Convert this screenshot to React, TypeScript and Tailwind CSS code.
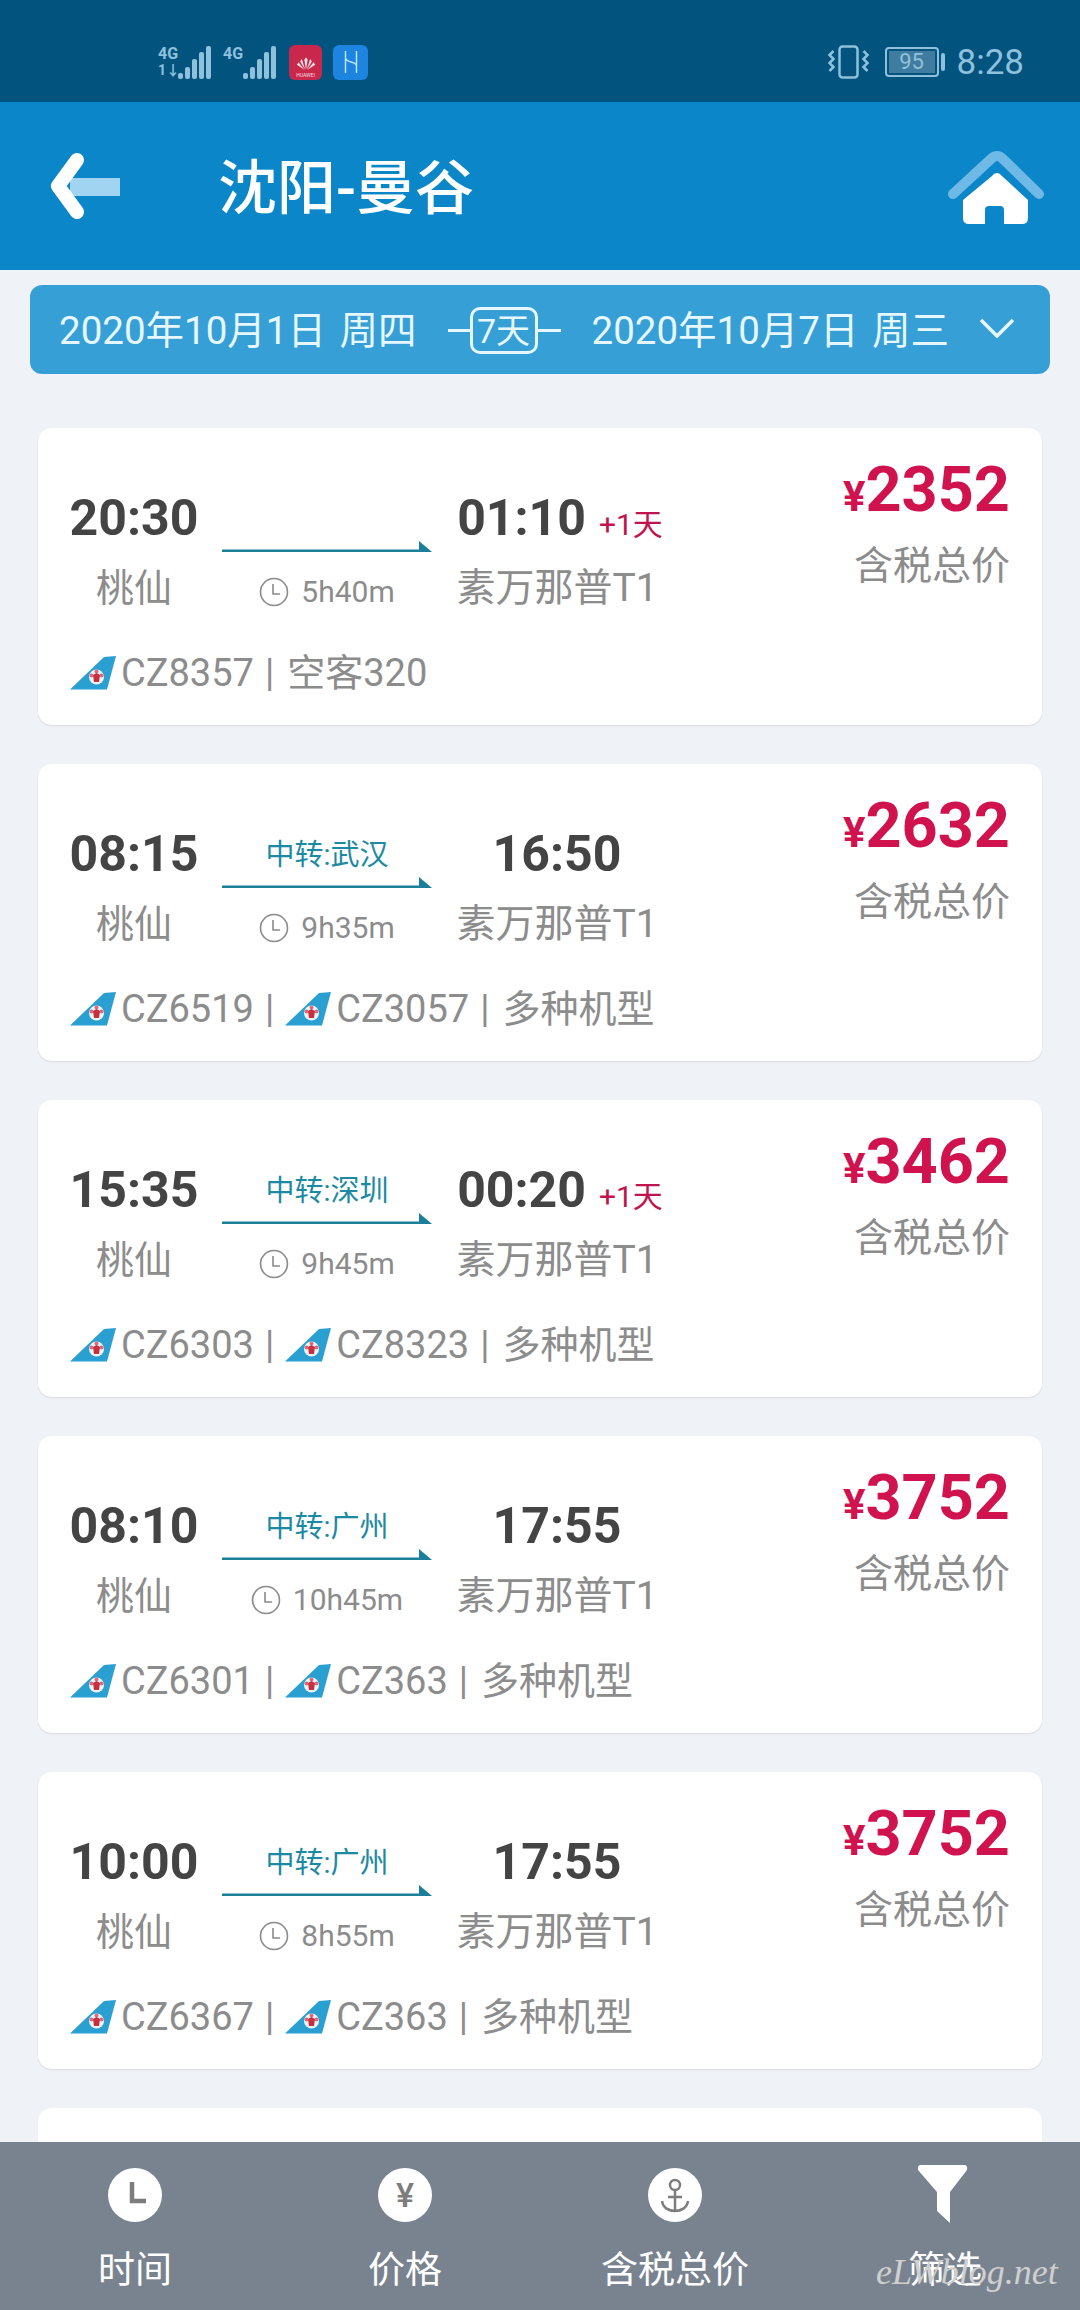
const FONT = "font-['Roboto','Noto_Sans_CJK_SC',sans-serif]";

interface Flight {
  dep: string;
  arr: string;
  plusDay?: boolean;
  via?: string;
  duration: string;
  flights: string[];
  plane: string;
  price: string;
}

const flights: Flight[] = [
  { dep: "20:30", arr: "01:10", plusDay: true, duration: "5h40m", flights: ["CZ8357"], plane: "空客320", price: "2352" },
  { dep: "08:15", arr: "16:50", via: "中转:武汉", duration: "9h35m", flights: ["CZ6519", "CZ3057"], plane: "多种机型", price: "2632" },
  { dep: "15:35", arr: "00:20", plusDay: true, via: "中转:深圳", duration: "9h45m", flights: ["CZ6303", "CZ8323"], plane: "多种机型", price: "3462" },
  { dep: "08:10", arr: "17:55", via: "中转:广州", duration: "10h45m", flights: ["CZ6301", "CZ363"], plane: "多种机型", price: "3752" },
  { dep: "10:00", arr: "17:55", via: "中转:广州", duration: "8h55m", flights: ["CZ6367", "CZ363"], plane: "多种机型", price: "3752" },
];

function Tail() {
  return (
    <svg viewBox="0 0 46 34" className="w-[46px] h-[34px] shrink-0">
      <path d="M0 33.5 L34 1 L46 0 L37 33.5 Z" fill="#2a9fd2" />
      <circle cx="26.5" cy="21" r="7.5" fill="#eef6fb" />
      <circle cx="26.5" cy="15.5" r="2" fill="#e2687a" />
      <circle cx="21.5" cy="19.5" r="2" fill="#e2687a" />
      <circle cx="31.5" cy="19.5" r="2" fill="#e2687a" />
      <path d="M23 19 L26.5 17 L30 19 L29 26 L24 26 Z" fill="#c8303f" />
    </svg>
  );
}

function Clock() {
  return (
    <svg viewBox="0 0 30 30" className="w-[30px] h-[30px]" fill="none" stroke="#8a8a8a" strokeWidth="1.6">
      <circle cx="15" cy="15" r="13.5" />
      <path d="M14 7 V17 H21" />
    </svg>
  );
}

function FlightCard({ f }: { f: Flight }) {
  return (
    <div className="bg-white rounded-[14px] h-[297px] shrink-0 shadow-[0_1px_2px_rgba(0,0,0,0.1)] pl-[15px] pr-[32px] pt-[60px]">
      <div className="flex">
        <div className="w-[162px] flex flex-col items-center">
          <div className="h-[60px] leading-[60px] text-[50px] font-bold text-[#444444]">{f.dep}</div>
          <div className="mt-[15px] leading-[50px] text-[38px] text-[#8c8c8c]">桃仙</div>
        </div>
        <div className="w-[210px] ml-[7px] flex flex-col items-center">
          <div className="h-[42px] leading-[42px] text-[29px] text-[#1d8aa3] mt-[10px]">{f.via ?? ""}</div>
          <svg viewBox="0 0 210 12" className="w-[210px] h-[12px] mt-[1px]">
            <path d="M0 8.5 H197 V0 L210 11 H0 Z" fill="#1a7f9a" />
          </svg>
          <div className="mt-[14px] flex items-center gap-[12px] text-[30px] leading-[50px] text-[#8c8c8c]">
            <Clock />
            {f.duration}
          </div>
        </div>
        <div className="w-[250px] flex flex-col items-center">
          <div className={f.plusDay ? "h-[60px] flex items-baseline gap-[13px] ml-[6px]" : "h-[60px] flex items-baseline"}>
            <span className="leading-[60px] text-[50px] font-bold text-[#444444]">{f.arr}</span>
            {f.plusDay && <span className="text-[30px] text-[#c0144f]">+1天</span>}
          </div>
          <div className="mt-[15px] leading-[50px] text-[39px] text-[#8c8c8c]">素万那普T1</div>
        </div>
        <div className="ml-auto flex flex-col items-end -mt-[33px]">
          <div className="flex items-baseline">
            <span className="text-[42px] font-bold text-[#d0124f]">¥</span>
            <span className="leading-[70px] text-[63px] font-bold text-[#d0124f]">{f.price}</span>
          </div>
          <div className="mt-[13px] leading-[50px] text-[39px] text-[#8c8c8c]">含税总价</div>
        </div>
      </div>
      <div className="mt-[31px] ml-[17px] flex items-center text-[38px] leading-[50px] text-[#8c8c8c]">
        {f.flights.map((no) => (
          <span key={no} className="flex items-center">
            <Tail />
            <span className="ml-[5px]">{no}</span>
            <span className="mx-[11px]">|</span>
          </span>
        ))}
        <span className="ml-[2px]">{f.plane}</span>
      </div>
    </div>
  );
}

function Signal({ first }: { first?: boolean }) {
  return (
    <div className="flex items-end gap-[2px] h-[33px]">
      <div className="flex flex-col text-[16px] leading-[16px] font-bold text-[#8fc0dc] mr-[1px] w-[17px] self-start whitespace-nowrap">
        <span>4G</span>
        {first && <span className="text-[14px]">1↓</span>}
      </div>
      {[6, 12, 20, 27, 33].map((h) => (
        <span key={h} className="w-[5px] bg-[#8fc0dc] rounded-[2px]" style={{ height: h }} />
      ))}
    </div>
  );
}

export default function App() {
  return (
    <div className={`${FONT} w-[1080px] h-[2310px] flex flex-col overflow-hidden bg-[#eff2f6]`}>
      {/* status bar */}
      <div className="h-[102px] shrink-0 bg-[#02547f] flex items-center pl-[158px] pr-[56px] pt-[22px]">
        <Signal first />
        <div className="ml-[12px]">
          <Signal />
        </div>
        <div className="ml-[13px] w-[33px] h-[35px] rounded-[6px] bg-[#c9284c] flex flex-col items-center justify-end pb-[2px]">
          <svg viewBox="0 0 24 16" className="w-[20px] h-[16px]" fill="#f7dfe3">
            <path d="M12 15 L10 3 L12 0 L14 3 Z M11 15 L5 5 L7 2 Z M13 15 L19 5 L17 2 Z M10 15 L1 9 L3 6 Z M14 15 L23 9 L21 6 Z" />
          </svg>
          <span className="text-[5px] leading-[6px] text-[#f7dfe3]">HUAWEI</span>
        </div>
        <div className="ml-[11px] w-[35px] h-[35px] rounded-[6px] bg-[#1d84e0] flex items-center justify-center">
          <svg viewBox="0 0 24 28" className="w-[22px] h-[26px]" fill="none" stroke="#bfe6fb" strokeWidth="1.6">
            <path d="M6 2 V26 M18 2 V26 M6 10 C8 16 16 12 18 18" />
          </svg>
        </div>
        <div className="ml-auto flex items-center text-[#8fc0dc]">
          <svg viewBox="0 0 42 34" className="w-[43px] h-[34px]" fill="none" stroke="#8fc0dc" strokeWidth="2.5">
            <rect x="12" y="1.5" width="18" height="31" rx="3" />
            <path d="M6 6 L2 10 L6 14 L2 18 L6 22 L2 26 M36 6 L40 10 L36 14 L40 18 L36 22 L40 26" />
          </svg>
          <div className="ml-[15px] w-[54px] h-[30px] rounded-[4px] border-2 border-[#8fc0dc] p-[2px]">
            <div className="w-full h-full bg-[#3f7c9f] flex items-center justify-center text-[22px] leading-none">95</div>
          </div>
          <span className="ml-[2px] w-[4px] h-[18px] rounded-[2px] bg-[#8fc0dc]" />
          <span className="ml-[12px] text-[35px] leading-none">8:28</span>
        </div>
      </div>

      {/* header */}
      <div className="h-[168px] shrink-0 bg-[#0b86c8] flex items-center pl-[50px] pr-[35px] text-white">
        <svg viewBox="0 0 70 66" className="w-[70px] h-[66px]">
          <path d="M20 25 H70 V43 H20 Z" fill="#a0d4f0" />
          <path d="M27 7 L8 33 L27 59" fill="none" stroke="white" strokeWidth="14" strokeLinecap="round" strokeLinejoin="round" />
        </svg>
        <div className="ml-[98px] text-[59px] font-medium leading-none mt-[4px]">沈阳-曼谷</div>
        <svg viewBox="0 0 98 76" className="ml-auto w-[98px] h-[76px]">
          <path d="M6 46 L44 11 Q50 5 56 11 L92 46" fill="none" stroke="#6fb9e6" strokeWidth="10" strokeLinecap="round" strokeLinejoin="round" />
          <path d="M50 25 Q47 25 45 28 L16 52 V70 Q16 76 22 76 H38 V62 Q38 58 42 58 H53 Q57 58 57 62 V76 H75 Q81 76 81 70 V52 L55 28 Q53 25 50 25 Z" fill="white" />
        </svg>
      </div>

      {/* date bar */}
      <div className="px-[30px] pt-[15px] shrink-0">
        <div className="h-[89px] rounded-[12px] bg-[#369fd6] flex items-center pl-[29px] pr-[35px] pt-[2px] text-[38.5px] text-[#e6f7ff]">
          <span className="[word-spacing:4px]">2020年10月1日 周四</span>
          <div className="ml-[31px] flex items-center">
            <span className="w-[22px] h-[3px] bg-[#e6f7ff]" />
            <span className="h-[47px] w-[68px] rounded-[10px] border-[3px] border-[#e6f7ff] flex items-center justify-center text-[34px] leading-none">7天</span>
            <span className="w-[23px] h-[3px] bg-[#e6f7ff]" />
          </div>
          <span className="ml-[31px] [word-spacing:4px]">2020年10月7日 周三</span>
          <svg viewBox="0 0 36 20" className="ml-auto w-[36px] h-[20px] -mt-[6px]" fill="none" stroke="#e6f7ff" strokeWidth="3.5">
            <path d="M2 2 L18 18 L34 2" />
          </svg>
        </div>
      </div>

      {/* flight list */}
      <div className="flex-1 min-h-0 overflow-hidden px-[38px] pt-[54px] flex flex-col gap-[39px]">
        {flights.map((f) => (
          <FlightCard key={f.dep + f.price} f={f} />
        ))}
        <div className="bg-white rounded-[14px] h-[297px] shrink-0" />
      </div>

      {/* bottom bar */}
      <div className="relative h-[168px] shrink-0 bg-[#78838f] grid grid-cols-4 text-white text-[37px] pt-[26px]">
        <div className="flex flex-col items-center">
          <div className="w-[54px] h-[54px] rounded-full bg-white flex items-center justify-center">
            <svg viewBox="0 0 54 54" className="w-[54px] h-[54px]" fill="none" stroke="#7d7d7d" strokeWidth="4.5">
              <path d="M24 14 V33 H38" />
            </svg>
          </div>
          <span className="mt-[21px] leading-[56px]">时间</span>
        </div>
        <div className="flex flex-col items-center">
          <div className="w-[54px] h-[54px] rounded-full bg-white flex items-center justify-center text-[34px] font-medium leading-none text-[#7d7d7d]">¥</div>
          <span className="mt-[21px] leading-[56px]">价格</span>
        </div>
        <div className="flex flex-col items-center">
          <div className="w-[54px] h-[54px] rounded-full bg-white flex items-center justify-center">
            <svg viewBox="0 0 54 54" className="w-[54px] h-[54px]" fill="none" stroke="#7d7d7d" strokeWidth="2.5">
              <circle cx="27" cy="17" r="5" />
              <path d="M27 22 V42 M20 29 H34 M14 33 C15 40 21 43 27 43 C33 43 39 40 40 33" />
            </svg>
          </div>
          <span className="mt-[21px] leading-[56px]">含税总价</span>
        </div>
        <div className="flex flex-col items-center">
          <svg viewBox="0 0 51 58" className="w-[51px] h-[58px] -mt-[3px] mb-[-1px] -translate-x-[3px]" fill="white">
            <path d="M4 0 H47 Q51 0 50 5 L33 27 V58 L20 46 V27 L1 5 Q0 0 4 0 Z" />
          </svg>
          <span className="mt-[21px] leading-[56px]">筛选</span>
        </div>
        <span className="absolute left-[876px] top-[112px] font-['Liberation_Serif',serif] italic text-[36px] leading-none text-[#cfcfcf]">eLWblog.net</span>
      </div>
    </div>
  );
}
